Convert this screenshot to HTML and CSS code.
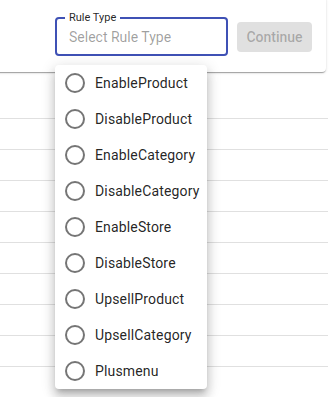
FILE: index.html
```html
<!DOCTYPE html>
<html lang="en">
<head>
    <meta charset="utf-8">
    <meta name="viewport" content="width=device-width, initial-scale=1.0">
    <title>Rule Type</title>
    <link rel="stylesheet" href="styles.css">
</head>
<body>
    <div id="page">
        <div class="card">
            <div class="field">
                <span class="field-label">Rule Type</span>
                <span class="placeholder">Select Rule Type</span>
            </div>
            <button class="btn" disabled>Continue</button>
        </div>

        <div class="rows">
            <div class="row"></div>
            <div class="row"></div>
            <div class="row"></div>
            <div class="row"></div>
            <div class="row"></div>
            <div class="row"></div>
            <div class="row"></div>
            <div class="row"></div>
            <div class="row"></div>
        </div>

        <ul class="menu">
            <li><svg viewBox="0 0 24 24"><circle cx="12" cy="12" r="9"/></svg>EnableProduct</li>
            <li><svg viewBox="0 0 24 24"><circle cx="12" cy="12" r="9"/></svg>DisableProduct</li>
            <li><svg viewBox="0 0 24 24"><circle cx="12" cy="12" r="9"/></svg>EnableCategory</li>
            <li><svg viewBox="0 0 24 24"><circle cx="12" cy="12" r="9"/></svg>DisableCategory</li>
            <li><svg viewBox="0 0 24 24"><circle cx="12" cy="12" r="9"/></svg>EnableStore</li>
            <li><svg viewBox="0 0 24 24"><circle cx="12" cy="12" r="9"/></svg>DisableStore</li>
            <li><svg viewBox="0 0 24 24"><circle cx="12" cy="12" r="9"/></svg>UpsellProduct</li>
            <li><svg viewBox="0 0 24 24"><circle cx="12" cy="12" r="9"/></svg>UpsellCategory</li>
            <li><svg viewBox="0 0 24 24"><circle cx="12" cy="12" r="9"/></svg>Plusmenu</li>
        </ul>
    </div>
</body>
</html>
```
FILE: styles.css
```css
* {
    margin: 0;
    padding: 0;
    box-sizing: border-box;
}
body {
    font-family: Roboto, "Liberation Sans", sans-serif;
    background: #fff;
    overflow: hidden;
}
#page {
    position: relative;
    display: flow-root;
    width: 330px;
    height: 397px;
}
.card {
    display: flex;
    align-items: center;
    gap: 9px;
    width: 336px;
    margin: -4px 0 0 -10px;
    padding: 21px 14px 16px 65px;
    background: #fff;
    border-radius: 4px;
    box-shadow: 0 2px 1px -1px rgba(0,0,0,0.2), 0 1px 1px 0 rgba(0,0,0,0.14), 0 1px 3px 0 rgba(0,0,0,0.12);
}
.field {
    position: relative;
    flex: none;
    width: 173px;
    height: 39px;
    border: 2px solid #3f51b5;
    border-radius: 4px;
    padding-left: 12px;
    display: flex;
    align-items: center;
}
.field-label {
    position: absolute;
    left: 8px;
    top: -9px;
    padding: 0 4px;
    background: #fff;
    font-size: 11px;
    line-height: 16px;
    color: rgba(0,0,0,0.87);
}
.placeholder {
    font-size: 14px;
    color: rgba(0,0,0,0.38);
    padding-top: 1px;
}
.btn {
    flex: none;
    width: 75px;
    height: 30px;
    border: none;
    border-radius: 4px;
    background: #e0e0e0;
    color: rgba(0,0,0,0.26);
    font: 500 14px Roboto, "Liberation Sans", sans-serif;
}
.rows {
    width: 328px;
    margin-top: 16px;
}
.row {
    height: 31px;
    border-bottom: 1px solid #e0e0e0;
}
.menu {
    position: absolute;
    left: 55px;
    top: 65px;
    width: 152px;
    list-style: none;
    background: #fff;
    border-radius: 4px;
    box-shadow: 0 5px 5px -3px rgba(0,0,0,0.2), 0 8px 10px 1px rgba(0,0,0,0.14), 0 3px 14px 2px rgba(0,0,0,0.12);
}
.menu li {
    display: flex;
    align-items: center;
    gap: 8px;
    height: 36px;
    padding-left: 8px;
    font-size: 14px;
    letter-spacing: 0.15px;
    color: rgba(0,0,0,0.87);
}
.menu svg {
    flex: none;
    width: 24px;
    height: 24px;
    fill: none;
    stroke: rgba(0,0,0,0.54);
    stroke-width: 2;
}
```
